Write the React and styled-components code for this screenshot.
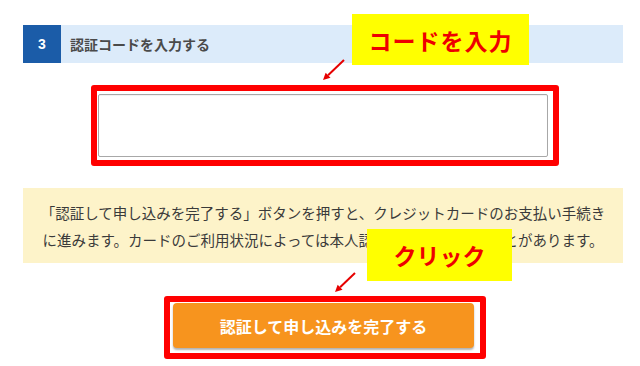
import React from "react";
import styled, { createGlobalStyle } from "styled-components";

const Global = createGlobalStyle`
  html, body { margin: 0; padding: 0; background: #ffffff; }
  body { font-family: "Noto Sans CJK JP", "Noto Sans", sans-serif; }
`;

const Page = styled.div`
  position: relative;
  width: 640px;
  height: 366px;
  box-sizing: border-box;
  padding: 25px 0 0 23px;
  display: flex;
  flex-direction: column;
  align-items: flex-start;
  overflow: hidden;
`;

const StepHeader = styled.div`
  display: flex;
  align-items: stretch;
  width: 600px;
  height: 38px;
  background: #dcebfa;
`;

const StepNumber = styled.div`
  width: 38px;
  background: #1b5ca8;
  color: #ffffff;
  font-family: "Liberation Sans", Arial, sans-serif;
  font-weight: 700;
  font-size: 14px;
  display: flex;
  align-items: center;
  justify-content: center;
`;

const StepTitle = styled.div`
  display: flex;
  align-items: center;
  padding-left: 9px;
  font-size: 14px;
  font-weight: 700;
  color: #4a4a4a;
`;

const HighlightFrame = styled.div`
  box-sizing: border-box;
  margin-top: ${(p) => p.$top}px;
  margin-left: ${(p) => p.$left}px;
  width: ${(p) => p.$w}px;
  height: ${(p) => p.$h}px;
  border: 6px solid #ff0000;
  border-radius: 3px;
  padding: ${(p) => p.$pad};
  display: flex;
  background: #ffffff;
`;

const CodeInput = styled.input`
  flex: 1;
  box-sizing: border-box;
  border: 1px solid #a8a8a8;
  border-radius: 2px;
  background: #ffffff;
  outline: none;
  font-size: 16px;
  box-shadow: inset 0 1px 1px rgba(0, 0, 0, 0.06);
`;

const Notice = styled.div`
  box-sizing: border-box;
  margin-top: 22px;
  width: 600px;
  height: 75px;
  background: #fdf3c9;
  padding-top: 11px;
  text-align: center;
  font-size: 14.5px;
  line-height: 27px;
  color: #3a3a3a;
`;

const SubmitButton = styled.button`
  flex: 1;
  border: none;
  border-radius: 4px;
  background: #f7941e;
  color: #ffffff;
  font-family: "Noto Sans CJK JP", "Noto Sans", sans-serif;
  font-size: 16px;
  font-weight: 700;
  box-shadow: 0 2px 2px rgba(0, 0, 0, 0.3);
  cursor: pointer;
`;

const Callout = styled.div`
  position: absolute;
  left: ${(p) => p.$x}px;
  top: ${(p) => p.$y}px;
  width: ${(p) => p.$w}px;
  height: ${(p) => p.$h}px;
  background: #ffff00;
  color: #ee0000;
  font-size: ${(p) => p.$fs}px;
  font-weight: 700;
  letter-spacing: ${(p) => p.$ls}px;
  display: flex;
  align-items: center;
  justify-content: center;
`;

const ArrowLayer = styled.svg`
  position: absolute;
  left: 0;
  top: 0;
  width: 640px;
  height: 366px;
  pointer-events: none;
`;

function Arrow({ x1, y1, x2, y2 }) {
  const ang = Math.atan2(y2 - y1, x2 - x1);
  const L = 7;
  const W = 3.5;
  const bx = x2 - L * Math.cos(ang);
  const by = y2 - L * Math.sin(ang);
  const px = -Math.sin(ang) * W;
  const py = Math.cos(ang) * W;
  return (
    <g>
      <line x1={x1} y1={y1} x2={bx} y2={by} stroke="#e60000" strokeWidth="2" />
      <polygon
        points={`${x2},${y2} ${bx + px},${by + py} ${bx - px},${by - py}`}
        fill="#e60000"
      />
    </g>
  );
}

export default function App() {
  return (
    <>
      <Global />
      <Page>
        <StepHeader>
          <StepNumber>3</StepNumber>
          <StepTitle>認証コードを入力する</StepTitle>
        </StepHeader>

        <HighlightFrame $top={22} $left={68} $w={468} $h={81} $pad="3px 5px 3px 1px">
          <CodeInput type="text" aria-label="認証コード" />
        </HighlightFrame>

        <Notice>
          「認証して申し込みを完了する」ボタンを押すと、クレジットカードのお支払い手続き
          <br />
          に進みます。カードのご利用状況によっては本人認証の入力が必要なことがあります。
        </Notice>

        <HighlightFrame $top={33} $left={141} $w={322} $h={63} $pad="1px 6px 5px 3px">
          <SubmitButton type="button">認証して申し込みを完了する</SubmitButton>
        </HighlightFrame>

        <Callout $x={352} $y={14} $w={177} $h={51} $fs={23} $ls={1}>
          コードを入力
        </Callout>
        <Callout $x={367} $y={229} $w={145} $h={52} $fs={23} $ls={0}>
          クリック
        </Callout>

        <ArrowLayer viewBox="0 0 640 366">
          <Arrow x1={344} y1={60} x2={323} y2={80} />
          <Arrow x1={355} y1={273} x2={335} y2={292} />
        </ArrowLayer>
      </Page>
    </>
  );
}
